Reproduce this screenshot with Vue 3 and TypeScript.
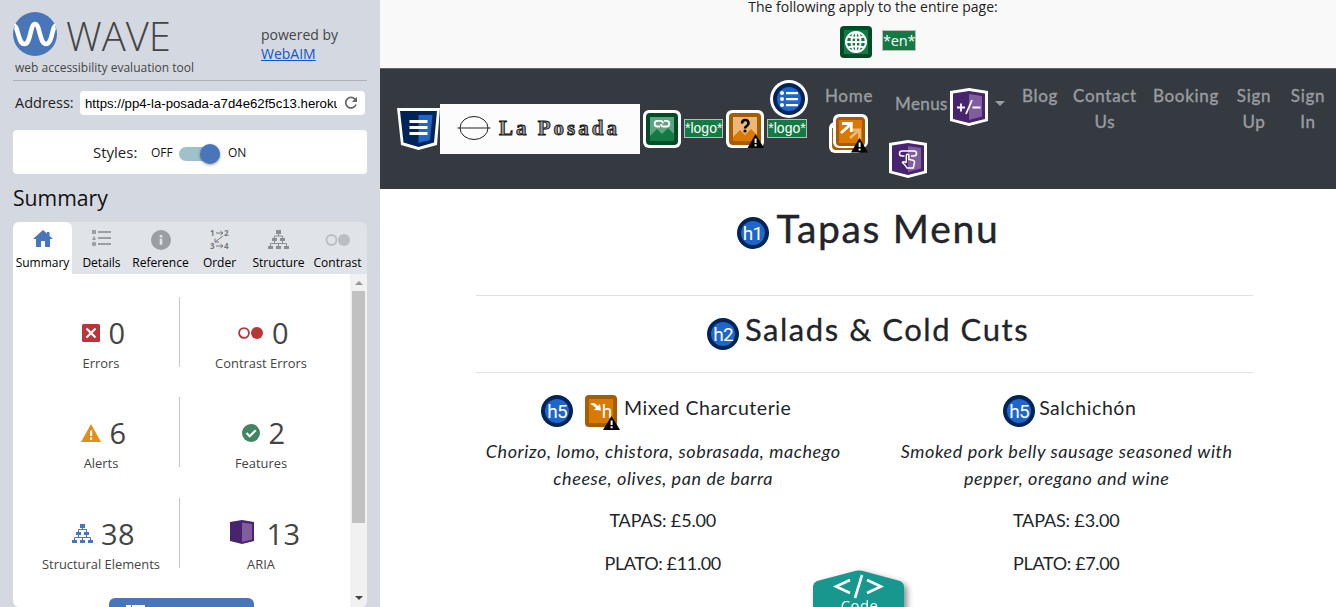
<script setup lang="ts">
interface Tab { name: string; icon: string }
interface Stat { icon: string; value: number; label: string }
interface Dish { name: string; lines: string[]; tapas: string; plato: string; alert: boolean }

const tabs: Tab[] = [
  { name: 'Summary', icon: 'home' },
  { name: 'Details', icon: 'list' },
  { name: 'Reference', icon: 'info' },
  { name: 'Order', icon: 'order' },
  { name: 'Structure', icon: 'tree' },
  { name: 'Contrast', icon: 'contrast' },
]
const stats: Stat[] = [
  { icon: 'error', value: 0, label: 'Errors' },
  { icon: 'contrast', value: 0, label: 'Contrast Errors' },
  { icon: 'alert', value: 6, label: 'Alerts' },
  { icon: 'feature', value: 2, label: 'Features' },
  { icon: 'tree', value: 38, label: 'Structural Elements' },
  { icon: 'aria', value: 13, label: 'ARIA' },
]
const links = [
  { cls: 'blog', text: ['Blog'] },
  { cls: 'contact', text: ['Contact', 'Us'] },
  { cls: 'booking', text: ['Booking'] },
  { cls: 'up', text: ['Sign', 'Up'] },
  { cls: 'in', text: ['Sign', 'In'] },
]
const dishes: Dish[] = [
  { name: 'Mixed Charcuterie', lines: ['Chorizo, lomo, chistora, sobrasada, machego', 'cheese, olives, pan de barra'], tapas: '£5.00', plato: '£11.00', alert: true },
  { name: 'Salchichón', lines: ['Smoked pork belly sausage seasoned with', 'pepper, oregano and wine'], tapas: '£3.00', plato: '£7.00', alert: false },
]
</script>

<template>
  <div class="app">
    <aside class="side">
      <header class="brand">
        <div class="brand-left">
          <div class="mark">
            <svg width="44" height="44" viewBox="0 0 44 44">
              <circle cx="22" cy="22" r="22" fill="#4876b8" />
              <path d="M1.5 14C5 14 5 32 11.5 32S17 12 22 12S26.500 32 33 32S39 14 42.500 14" fill="none" stroke="#fff" stroke-width="4.600" />
            </svg>
            <span>WAVE</span>
          </div>
          <div class="tagline">web accessibility evaluation tool</div>
        </div>
        <div class="powered">powered by<br /><a>WebAIM</a></div>
      </header>
      <div class="address">
        <label>Address:</label>
        <div class="field">
          <span>https://pp4-la-posada-a7d4e62f5c13.herokuapp.com</span>
          <svg width="14" height="14" viewBox="0 0 14 14"><path d="M11.300 3.500A5.300 5.300 0 1 0 12 8.500" fill="none" stroke="#666" stroke-width="1.700" /><path d="M13 .8V6H7.800z" fill="#666" /></svg>
        </div>
      </div>
      <div class="styles">
        <label>Styles:</label><span class="off">OFF</span>
        <div class="switch"><i></i></div>
        <span>ON</span>
      </div>
      <h2>Summary</h2>
      <nav class="tabs">
        <div v-for="(t, i) in tabs" :key="t.name" :class="['tab', { active: i === 0 }]">
          <svg width="28" height="24" viewBox="0 0 28 24">
            <path v-if="t.icon === 'home'" d="M14 4L4 13H7V21H12V15H16V21H21V13H24L20.500 9.900V6H18V7.600z" fill="#4876b8" />
            <g v-else-if="t.icon === 'list'" fill="#9b9ea2"><path d="M4 4h4v4H4zM4 14l2-4.500 2 4.500z" /><circle cx="6" cy="18" r="2.200" /><path d="M10 5h13v2H10zM10 11h13v2H10zM10 17h13v2H10z" /></g>
            <g v-else-if="t.icon === 'info'"><circle cx="14" cy="14" r="10" fill="#9b9ea2" /><path d="M12.700 9h2.600v2.500h-2.600zM12.700 12.800h2.600v6h-2.600z" fill="#e0e3e7" /></g>
            <g v-else-if="t.icon === 'order'" fill="#77797c"><text x="4" y="10">1</text><text x="18" y="10">2</text><text x="4" y="23">3</text><text x="18" y="23">4</text><path d="M10 7h7M14.500 5l2.500 2-2.500 2M10 20h7M14.500 18l2.500 2-2.500 2M17 10l-8 6M9 12.500V16h4" fill="none" stroke="#77797c" /></g>
            <g v-else-if="t.icon === 'tree'" fill="#8b8e92"><path d="M11 4h5v4h-5zM7 12h5v3H7zM15 12h5v3h-5zM3 20h5v3H3zM11 20h5v3h-5zM19 20h5v3h-5z" /><path d="M13.500 8v2M9.500 12v-2h8v2M9.500 15v2.500M17.500 15v2.500M5.500 20v-2.500h16V20M13.500 17.500V20" fill="none" stroke="#8b8e92" /></g>
            <g v-else><circle cx="7.500" cy="14" r="5" fill="none" stroke="#bbbec3" stroke-width="1.900" /><circle cx="20" cy="14" r="6" fill="#bbbec3" /></g>
          </svg>
          <span>{{ t.name }}</span>
        </div>
      </nav>
      <div class="panel">
        <div class="panel-body">
          <div class="stats">
            <div v-for="s in stats" :key="s.label" class="stat">
              <div :class="['figure', s.icon]">
                <svg v-if="s.icon === 'error'" width="18" height="18" viewBox="0 0 18 18"><rect width="18" height="18" rx="1.500" fill="#b93638" /><path d="M4.500 4.500l9 9M13.500 4.500l-9 9" stroke="#fff" stroke-width="2.200" /></svg>
                <svg v-else-if="s.icon === 'contrast'" width="25" height="18" viewBox="0 0 25 18"><circle cx="6" cy="9" r="4.900" fill="none" stroke="#b93638" stroke-width="1.900" /><circle cx="19" cy="9" r="6" fill="#b93638" /></svg>
                <svg v-else-if="s.icon === 'alert'" width="20" height="18" viewBox="0 0 20 18"><path d="M10 0L20 18H0z" fill="#e58d1b" /><path d="M9 6.500h2.200V12H9zM9 13.500h2.200v2.200H9z" fill="#fff" /></svg>
                <svg v-else-if="s.icon === 'feature'" width="18" height="18" viewBox="0 0 18 18"><circle cx="9" cy="9" r="9" fill="#438463" /><path d="M4.500 9l3.200 3.200 6-6" fill="none" stroke="#fff" stroke-width="2.200" /></svg>
                <svg v-else-if="s.icon === 'tree'" width="21" height="20" viewBox="0 0 21 20"><g fill="#4876b8"><path d="M8 0h5v4H8zM4 8h5v3H4zM12 8h5v3h-5zM0 16h5v3H0zM8 16h5v3H8zM16 16h5v3h-5z" /><path d="M10.500 4v2M6.500 8V5.500h8V8M6.500 11v2.500M14.500 11v2.500M2.500 16v-2.500h16V16M10.500 13.500V16" fill="none" stroke="#4876b8" /></g></svg>
                <svg v-else width="24" height="24" viewBox="0 0 24 24"><path d="M0 2L12 0 24 2V21L12 24 0 21z" fill="#48236e" /><path d="M12 2.500L22 4V19.500L12 22z" fill="#815c9f" /></svg>
                <b>{{ s.value }}</b>
              </div>
              <div class="label">{{ s.label }}</div>
            </div>
          </div>
          <div class="details"><svg width="20" height="4"><path d="M0 1h5v3H0zM6 1h13v3h-2V3H6z" fill="#fff" /></svg></div>
        </div>
        <div class="scroll"><i class="tri up-tri"></i><div class="thumb"></div><i class="tri down-tri"></i></div>
      </div>
    </aside>

    <main class="page">
      <section class="global">
        <p>The following apply to the entire page:</p>
        <div class="global-row">
          <svg width="32" height="32" viewBox="0 0 32 32"><rect width="32" height="32" rx="4" fill="#004c25" /><rect x="4" y="4" width="24" height="24" fill="#147a45" /><g fill="none" stroke="#fff" stroke-width="1.900"><circle cx="16" cy="16" r="10" /><ellipse cx="16" cy="16" rx="4.500" ry="10" /><path d="M6 16h20M16 6v20M8 10.500q8 2.500 16 0M8 21.500q8-2.500 16 0" /></g></svg>
          <span class="tag lang">*en*</span>
        </div>
      </section>

      <nav class="navbar">
        <svg class="css" width="43" height="43" viewBox="0 0 43 43"><path d="M0 1H43L40 38 21.500 43 4 38z" fill="#fff" /><path d="M3 4H40L37 35.500 21.500 40 6.500 35.500z" fill="#002457" /><path d="M21.500 8H35.500L33 33 21.500 36z" fill="#1e66c9" /><path d="M12.500 13h18v3h-18zM12.500 19h18v3h-18zM12.500 25h18v3h-18z" fill="#fff" /></svg>
        <div class="logo">
          <svg width="34" height="26" viewBox="0 0 34 26"><ellipse cx="17" cy="12" rx="14" ry="11.500" fill="none" stroke="#222" /><path d="M.5 12h33" stroke="#222" /></svg>
          <span>La Posada</span>
        </div>
        <svg class="ic" width="38" height="38" viewBox="0 0 38 38"><rect width="38" height="38" rx="6" fill="#fff" /><rect x="3" y="3" width="32" height="32" rx="4" fill="#004c25" /><path d="M7 7h24v24H7z" fill="#5ba580" /><path d="M7 26l7-7 5 5 6-6 6 6v7H7z" fill="#147a45" /><path d="M17 16.500h-2.500a2.800 2.800 0 0 1 0-5.600h3.200q2 0 2.300 2.400M21 10.900h2.500a2.800 2.800 0 0 1 0 5.600h-3.200q-2 0-2.300-2.400" fill="none" stroke="#fff" stroke-width="1.900" /></svg>
        <span class="tag logo-tag">*logo*</span>
        <svg class="ic" width="38" height="38" viewBox="0 0 38 38"><rect width="38" height="38" rx="6" fill="#fff" /><rect x="3" y="3" width="32" height="32" rx="4" fill="#a65c00" /><path d="M7 7h24v24H7z" fill="#edb777" /><path d="M7 27l7-7 5 5 6-6 6 6v6H7z" fill="#da7900" /><path d="M16 13.500q0-3.500 3.300-3.500T22.500 13.200q0 1.700-1.800 2.800T19 18.500" fill="none" stroke="#000" stroke-width="2.600" /><circle cx="19" cy="21" r="1.600" /><path d="M29.500 24L38 38H21.500z" /><path d="M28.600 28.500h2V33h-2zM28.600 34.300h2v2h-2z" fill="#fff" /></svg>
        <div class="stack">
          <svg width="38" height="38" viewBox="0 0 38 38"><circle cx="19" cy="19" r="19" fill="#fff" /><circle cx="19" cy="19" r="16" fill="#002457" /><circle cx="19" cy="19" r="12" fill="#1e66c9" /><g fill="#fff"><circle cx="12" cy="13" r="2" /><circle cx="12" cy="19" r="2" /><circle cx="12" cy="25" r="2" /><path d="M16 12h12v2.200H16zM16 18h12v2.200H16zM16 24h12v2.200H16z" /></g></svg>
          <span class="tag logo-tag">*logo*</span>
        </div>
        <div class="link home">
          <span>Home</span>
          <svg width="39" height="39" viewBox="0 0 39 39"><rect y="8" width="34" height="31" rx="6" fill="#fff" /><path d="M3 14v18q0 4 4 4h22v-3H8V14z" fill="#a65c00" /><rect x="4" width="35" height="34" rx="6" fill="#fff" /><rect x="7" y="3" width="29" height="29" rx="4" fill="#a65c00" /><path d="M10 6h23v23H10z" fill="#da7900" /><path d="M21 24l9-8M22 16h8.500v9" fill="none" stroke="#edb777" stroke-width="2.800" /><path d="M12 19l10-9M13 9.500h9.300V18" fill="none" stroke="#fff" stroke-width="2.800" /><path d="M30.500 24L39 38.500H22z" /><path d="M29.600 28.500h2V33h-2zM29.600 34.500h2v2h-2z" fill="#fff" /></svg>
        </div>
        <div class="menus">
          <div class="menus-row">
            <span>Menus</span>
            <svg width="38" height="38" viewBox="0 0 38 38"><path d="M0 3L19 0 38 3V33L19 38 0 33z" fill="#fff" /><path d="M3 5.500L19 3 35 5.500V31L19 35 3 31z" fill="#48236e" /><path d="M19 6L32 8V28.500L19 32z" fill="#815c9f" /><path d="M7 19.500h8M11 15.500v8M22 12l-6 14M22.500 19.500h8" stroke="#fff" stroke-width="1.800" /></svg>
            <i class="caret"></i>
          </div>
          <svg width="38" height="38" viewBox="0 0 38 38"><path d="M0 3L19 0 38 3V33L19 38 0 33z" fill="#fff" /><path d="M3 5.500L19 3 35 5.500V31L19 35 3 31z" fill="#48236e" /><path d="M19 6L32 8V28.500L19 32z" fill="#815c9f" /><path d="M15.500 16H13a2.500 2.500 0 0 1 0-5h12a2.500 2.500 0 0 1 0 5h-3M17.300 22.500V15.500a1.300 1.300 0 0 1 2.600 0v4l4 .8q1.900.5 1.500 2.700L24.300 28h-6.300q-1.300-2.500-4.500-5.500 1-1.700 3.800.5" fill="none" stroke="#fff" stroke-width="1.500" /></svg>
        </div>
        <div v-for="l in links" :key="l.cls" :class="['link', l.cls]"><span v-for="t in l.text" :key="t">{{ t }}</span></div>
      </nav>

      <section class="menu">
        <div class="title t1">
          <svg width="32" height="32" viewBox="0 0 32 32"><circle cx="16" cy="16" r="16" fill="#002457" /><circle cx="16" cy="16" r="12" fill="#1e66c9" /><text x="15.500" y="23">h1</text></svg>
          <h1>Tapas Menu</h1>
        </div>
        <div class="title t2">
          <svg width="32" height="32" viewBox="0 0 32 32"><circle cx="16" cy="16" r="16" fill="#002457" /><circle cx="16" cy="16" r="12" fill="#1e66c9" /><text x="16" y="23">h2</text></svg>
          <h3>Salads &amp; Cold Cuts</h3>
        </div>
        <div class="row">
          <article v-for="d in dishes" :key="d.name">
            <div class="dish">
              <svg width="32" height="32" viewBox="0 0 32 32"><circle cx="16" cy="16" r="16" fill="#002457" /><circle cx="16" cy="16" r="12" fill="#1e66c9" /><text x="16" y="23">h5</text></svg>
              <svg v-if="d.alert" class="skip" width="35" height="35" viewBox="0 0 35 35"><rect width="32" height="32" rx="4" fill="#a65c00" /><path d="M4 4h24v24H4z" fill="#da7900" /><path d="M5 9q4-3 8 2l2-2 1 6.500-7-.5 2-2q-3-3-6-4z" fill="#fff" /><text x="21.500" y="23">h</text><path d="M26.500 21L35 35H18z" /><path d="M25.600 25.500h2V30h-2zM25.600 31.300h2v2h-2z" fill="#fff" /></svg>
              <h5>{{ d.name }}</h5>
            </div>
            <p class="desc"><span v-for="l in d.lines" :key="l">{{ l }}</span></p>
            <p class="price">TAPAS: {{ d.tapas }}</p>
            <p class="price plato">PLATO: {{ d.plato }}</p>
          </article>
        </div>
      </section>
      <div class="code">
        <svg width="100" height="50" viewBox="0 0 100 50"><path d="M0 60V17q0-4 4-6L43 .8q3-.8 6 0L87 11q4 2 4 6V60z" fill="#18978f" /><path d="M37 10L23 16.500 37 23M54 10l14 6.500L54 23M49 5L42 28" fill="none" stroke="#fff" stroke-width="2.600" /><text x="46.500" y="41">Code</text></svg>
      </div>
    </main>
  </div>
</template>

<style>
body { margin: 0; overflow: hidden; }
</style>
<style scoped>
* { box-sizing: border-box; }
svg { display: block; flex: none; }
.app { display: flex; width: 1336px; height: 607px; overflow: hidden; font-family: "Open Sans", sans-serif; }
.side { width: 380px; height: 607px; padding: 0 13px; background: #d4d9e1; display: flex; flex-direction: column; color: #444; flex: none; }
.brand { display: flex; justify-content: space-between; height: 81px; border-bottom: 1px solid #aeb2b8; padding-top: 12px; flex: none; }
.mark { display: flex; height: 44px; }
.mark span { font-size: 40px; font-weight: 300; line-height: 47px; margin-left: 9px; }
.tagline { font-size: 12px; line-height: 18px; margin: 3px 0 0 2px; }
.powered { width: 106px; font-size: 14px; line-height: 19px; padding-top: 13px; }
.powered a { color: #0f56cc; text-decoration: underline; }
.address { display: flex; align-items: center; height: 24px; margin: 10px 2px 0; flex: none; }
.address label { width: 65px; font-size: 14.500px; color: #222; margin-top: -2px; }
.field { flex: 1; height: 24px; border-radius: 4px; background: #fff; display: flex; align-items: center; padding: 0 7px 0 5px; }
.field span { width: 252px; overflow: hidden; white-space: nowrap; font: 13.200px "Liberation Sans", sans-serif; color: #000; margin-right: 7px; }
.styles { margin-top: 15px; height: 44px; border-radius: 4px; background: #fff; display: flex; align-items: center; padding: 0 0 0 80px; font-size: 12px; color: #111; flex: none; }
.styles label { font-size: 15px; width: 58px; color: #222; }
.styles .off { width: 28px; }
.switch { width: 41px; height: 14px; border-radius: 7px; background: #9fc1cb; display: flex; justify-content: flex-end; align-items: center; margin-right: 8px; margin-top: 4px; }
.switch i { width: 20px; height: 20px; border-radius: 50%; background: #4876b8; box-shadow: 0 1px 3px #0006; }
h2 { margin: 8px 0 9px; font-size: 21.200px; line-height: 31px; font-weight: 400; color: #111; flex: none; }
.tabs { display: flex; height: 52px; background: #e0e3e7; border-radius: 6px 6px 0 0; flex: none; }
.tab { width: 59px; display: flex; flex-direction: column; align-items: center; padding-top: 4px; font-size: 12px; color: #000; }
.tab.active { background: #fff; border-radius: 6px 6px 0 0; }
.tab span { line-height: 16px; margin-top: 5px; }
.tab text { font: bold 8px "Open Sans", sans-serif; }
.panel { flex: 1; display: flex; background: #fff; border-radius: 0 0 6px 6px; overflow: hidden; }
.panel-body { width: 337px; padding: 23px 0 0 8px; }
.stats { display: grid; grid-template-columns: 159px 160px; row-gap: 30.400px; }
.stat { height: 70px; display: flex; flex-direction: column; align-items: center; padding-left: 2px; }
.stat:nth-child(odd) { border-right: 1px solid #c4c4c4; }
.figure { height: 57px; padding-top: 15px; display: flex; align-items: center; gap: 9px; margin-left: 5px; flex: none; }
.figure.tree { gap: 8px; }
.figure.aria { gap: 13px; margin-left: 8px; }
.figure.aria svg { margin-top: -3px; }
.figure b { font-size: 29px; font-weight: 400; line-height: 40px; letter-spacing: .3px; }
.label { font-size: 12.900px; line-height: 18px; white-space: nowrap; }
.details { width: 145px; height: 40px; margin: 30px 0 0 88px; border-radius: 6px; background: #4876b8; padding: 6px 17px; }
.scroll { width: 17px; background: #f1f1f1; display: flex; flex-direction: column; align-items: center; }
.thumb { width: 13px; height: 232px; background: #c1c1c1; margin: 6px 0 73px; }
.tri { border: 4px solid transparent; height: 0; }
.up-tri { border-bottom-color: #999; border-top: 0; margin-top: 7px; }
.down-tri { border-top-color: #444; border-bottom: 0; }

.page { width: 956px; background: #fff; position: relative; }
.global { height: 69px; background: #f9f9f9; border-bottom: 1px solid #666; }
.global p { text-align: center; line-height: 14px; height: 26px; padding-left: 30px; font-size: 14px; color: #222; }
.global-row { display: flex; margin-left: 460px; gap: 10px; align-items: flex-start; }
.tag { background: #147a45; border: 1px solid #bbb; color: #fff; height: 19px; line-height: 17px; text-align: center; flex: none; letter-spacing: 0; }
.lang { width: 34px; height: 21px; font-size: 14.500px; margin-top: 4px; line-height: 20px; letter-spacing: -.2px; }
.logo-tag { width: 39px; font: 14px/17px "Liberation Sans", sans-serif; }
.navbar { height: 120px; background: #343a40; display: flex; align-items: flex-start; padding-left: 17px; font-family: Lato, sans-serif; font-size: 17px; line-height: 26px; color: #999ca0; letter-spacing: .7px; }
.link span, .menus-row span { -webkit-text-stroke: .4px #999ca0; }
.css { margin-top: 38px; }
.logo { width: 200px; height: 50px; margin-top: 35px; background: #fcfcfc; display: flex; align-items: center; padding-left: 17px; }
.logo span { font: bold 21px "Liberation Serif", serif; color: #999; -webkit-text-stroke: .9px #111; margin: -2px 0 0 8px; letter-spacing: 3px; white-space: nowrap; }
.ic { margin: 41px 3px 0; }
.navbar > .logo-tag { margin-top: 50px; }
.stack { width: 40px; margin-top: 11px; }
.stack svg { margin-left: 3px; }
.stack .tag { display: block; width: 40px; margin-top: 1px; }
.link { margin-top: 14px; display: flex; flex-direction: column; align-items: center; flex: none; }
.home { margin-left: 18px; width: 48px; }
.home svg { margin: 5px 1px 0 0; }
.menus { margin: 19px 0 0 16px; width: 117px; }
.menus-row { display: flex; align-items: center; height: 38px; margin: 0 0 14px 6px; }
.menus-row span { width: 55px; line-height: 30px; margin-top: -6px; letter-spacing: .4px; }
.caret { border: 5px solid transparent; border-top-color: #999ca0; border-bottom: 0; margin: -8px 0 0 7px; }
.blog { width: 36px; margin-left: 16px; }
.contact { width: 64px; margin-left: 15px; }
.booking { width: 66px; margin-left: 16px; }
.up { width: 36px; margin-left: 17px; }
.in { width: 36px; margin-left: 18px; }
.menu { width: 777px; margin-left: 96px; font-family: Lato, sans-serif; color: #212529; }
.menu text { font: 19px Roboto, sans-serif; fill: #fff; text-anchor: middle; letter-spacing: -.8px; }
.title { display: flex; justify-content: center; border-bottom: 1px solid #dfe0e1; }
h1, h3, h5, p { font-weight: 400; margin: 0; white-space: nowrap; }
.t1 { height: 107px; padding-left: 7px; }
.t1 svg { margin-top: 28px; }
h1 { font-size: 39px; line-height: 48px; margin: 15px 0 0 8px; letter-spacing: 1.700px; -webkit-text-stroke: .4px #212529; }
.t2 { height: 77px; padding-left: 7px; }
.t2 svg { margin-top: 22px; }
h3 { font-size: 31px; line-height: 40px; margin: 13px 0 0 6px; letter-spacing: 1.550px; -webkit-text-stroke: .3px #212529; }
.row { display: grid; grid-template-columns: 1fr 1fr; margin: 0 -15px; padding-top: 22px; }
article { text-align: center; }
.dish { display: flex; justify-content: center; height: 43px; padding-left: 7px; }
.skip { margin-left: 12px; }
h5 { font-size: 19.500px; line-height: 24px; margin: 1px 0 0 4px; letter-spacing: .55px; }
.desc { font-style: italic; font-size: 18px; line-height: 27px; letter-spacing: .58px; margin-bottom: 15px; padding-left: 1px; }
.desc span { display: block; }
.price { font-size: 18px; line-height: 27px; margin-bottom: 16px; letter-spacing: -.15px; }
.plato { letter-spacing: -.35px; }
.code { position: absolute; left: 433px; top: 570px; filter: drop-shadow(3px 3px 3px #0007); }
.code text { font: 15px "Open Sans", sans-serif; fill: #fff; text-anchor: middle; letter-spacing: .4px; }
</style>
